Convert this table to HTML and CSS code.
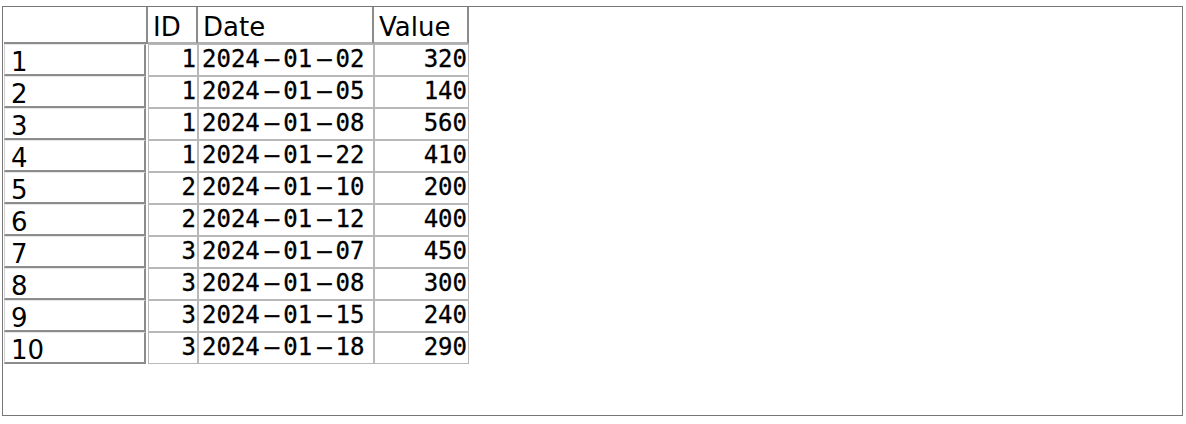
FILE: index.html
```html
<!DOCTYPE html>
<html>
<head>
<meta charset="utf-8">
<link rel="stylesheet" href="styles.css">
</head>
<body>
<div class="frame">
  <div class="grid">
    <div class="corner"></div>
    <div class="colhead">ID</div>
    <div class="colhead">Date</div>
    <div class="colhead">Value</div>

    <div class="rowhead">1</div><div class="cell num">1</div><div class="cell">2024<span class="d">–</span>01<span class="d">–</span>02</div><div class="cell num">320</div>
    <div class="rowhead">2</div><div class="cell num">1</div><div class="cell">2024<span class="d">–</span>01<span class="d">–</span>05</div><div class="cell num">140</div>
    <div class="rowhead">3</div><div class="cell num">1</div><div class="cell">2024<span class="d">–</span>01<span class="d">–</span>08</div><div class="cell num">560</div>
    <div class="rowhead">4</div><div class="cell num">1</div><div class="cell">2024<span class="d">–</span>01<span class="d">–</span>22</div><div class="cell num">410</div>
    <div class="rowhead">5</div><div class="cell num">2</div><div class="cell">2024<span class="d">–</span>01<span class="d">–</span>10</div><div class="cell num">200</div>
    <div class="rowhead">6</div><div class="cell num">2</div><div class="cell">2024<span class="d">–</span>01<span class="d">–</span>12</div><div class="cell num">400</div>
    <div class="rowhead">7</div><div class="cell num">3</div><div class="cell">2024<span class="d">–</span>01<span class="d">–</span>07</div><div class="cell num">450</div>
    <div class="rowhead">8</div><div class="cell num">3</div><div class="cell">2024<span class="d">–</span>01<span class="d">–</span>08</div><div class="cell num">300</div>
    <div class="rowhead">9</div><div class="cell num">3</div><div class="cell">2024<span class="d">–</span>01<span class="d">–</span>15</div><div class="cell num">240</div>
    <div class="rowhead">10</div><div class="cell num">3</div><div class="cell">2024<span class="d">–</span>01<span class="d">–</span>18</div><div class="cell num">290</div>
  </div>
</div>
</body>
</html>
```
FILE: styles.css
```css
html, body {
  margin: 0;
  padding: 0;
  background: #ffffff;
}
.frame {
  margin: 6px 3px 0 2px;
  height: 408px;
  border: 1px solid #777777;
  box-sizing: content-box;
  padding: 0 0 0 1px;
}
.grid {
  display: grid;
  grid-template-columns: 144px 50px 176px 95px;
  grid-template-rows: 37px repeat(10, 32px);
  width: max-content;
}
.corner, .colhead, .rowhead, .cell {
  box-sizing: border-box;
  color: #000;
  white-space: nowrap;
}
.corner {
  border-right: 2px solid #8c8c8c;
  border-bottom: 2px solid #8c8c8c;
}
.colhead {
  font-family: "DejaVu Sans", sans-serif;
  font-size: 26px;
  line-height: 30px;
  padding: 5px 0 0 5px;
  border-right: 2px solid #8c8c8c;
  border-bottom: 2px solid #b0b0b0;
}
.rowhead {
  display: flex;
  align-items: flex-end;
  font-family: "DejaVu Sans", sans-serif;
  font-size: 26px;
  line-height: 24px;
  padding: 0 0 0 6px;
  border-top: 1px solid #e6e6e6;
  border-left: 1px solid #d0d0d0;
  border-right: 2px solid #8c8c8c;
  border-bottom: 2px solid #8c8c8c;
  margin-right: 2px;
}
.cell {
  font-family: "DejaVu Sans Mono", monospace;
  font-size: 24px;
  line-height: 28px;
  padding: 0 3px;
  border: 1px solid #b8b8b8;
  color: #000;
  -webkit-text-stroke: 0.3px #000;
}
.d {
  margin: 0 4px 0 5px;
}
.num {
  text-align: right;
  padding-right: 1px;
}
```
